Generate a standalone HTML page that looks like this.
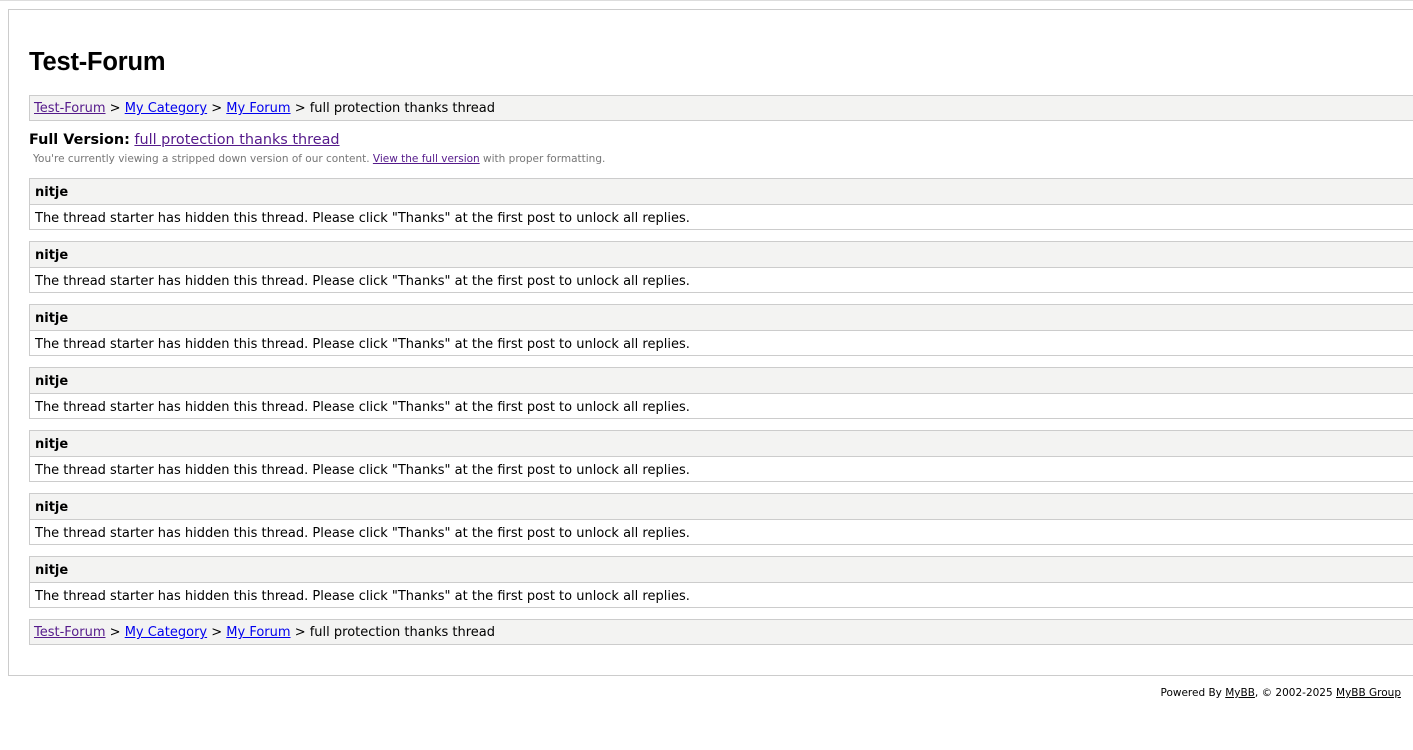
<!DOCTYPE html>
<html><head><meta charset="utf-8"><style>
html,body{margin:0;padding:0;width:1413px;height:750px;overflow:hidden;background:#fff;font-family:"DejaVu Sans",Verdana,sans-serif;color:#000}
.topline{position:absolute;left:0;top:0;width:1413px;height:1px;background:#ddd}
#container{position:absolute;left:8px;top:9px;width:1440px;height:665px;border:1px solid #ccc;border-right:none}
h1{position:absolute;left:20px;top:38px;margin:0;font:bold 25.5px "Liberation Sans",Arial,sans-serif;letter-spacing:-0.2px}
.nav{position:absolute;left:20px;width:1420px;height:26px;background:#f3f3f2;border:1px solid #ccc;font-size:13px;line-height:26px;padding-left:4px;box-sizing:border-box}
a{color:#0000ee}a.v{color:#551a8b}
.fv{position:absolute;left:20px;top:122px;font-size:14.4px}
.fv b{font-weight:bold}
.note{position:absolute;left:24px;top:143px;font-size:10.5px;color:#777}
.note a{color:#551a8b}
.post{position:absolute;left:20px;width:1420px;border:1px solid #ccc;box-sizing:border-box}
.post .h{height:25px;background:#f3f3f2;border-bottom:1px solid #ccc;font-weight:bold;font-size:13px;line-height:28px;padding-left:5px}
.post .m{height:24px;font-size:13px;line-height:27px;padding-left:5px}
.foot{position:absolute;right:12px;top:687px;font-size:10.5px}
.foot a{color:#000}
</style></head><body>
<div class="topline"></div>
<div id="container">
<h1>Test-Forum</h1>
<div class="nav" style="top:85px"><a class="v" href="#">Test-Forum</a> &gt; <a href="#">My Category</a> &gt; <a href="#">My Forum</a> &gt; full protection thanks thread</div>
<div class="fv"><b>Full Version:</b> <a class="v" href="#">full protection thanks thread</a></div>
<div class="note">You're currently viewing a stripped down version of our content. <a href="#">View the full version</a> with proper formatting.</div>
<div class="post" style="top:168px"><div class="h">nitje</div><div class="m">The thread starter has hidden this thread. Please click "Thanks" at the first post to unlock all replies.</div></div>
<div class="post" style="top:231px"><div class="h">nitje</div><div class="m">The thread starter has hidden this thread. Please click "Thanks" at the first post to unlock all replies.</div></div>
<div class="post" style="top:294px"><div class="h">nitje</div><div class="m">The thread starter has hidden this thread. Please click "Thanks" at the first post to unlock all replies.</div></div>
<div class="post" style="top:357px"><div class="h">nitje</div><div class="m">The thread starter has hidden this thread. Please click "Thanks" at the first post to unlock all replies.</div></div>
<div class="post" style="top:420px"><div class="h">nitje</div><div class="m">The thread starter has hidden this thread. Please click "Thanks" at the first post to unlock all replies.</div></div>
<div class="post" style="top:483px"><div class="h">nitje</div><div class="m">The thread starter has hidden this thread. Please click "Thanks" at the first post to unlock all replies.</div></div>
<div class="post" style="top:546px"><div class="h">nitje</div><div class="m">The thread starter has hidden this thread. Please click "Thanks" at the first post to unlock all replies.</div></div>
<div class="nav" style="top:609px"><a class="v" href="#">Test-Forum</a> &gt; <a href="#">My Category</a> &gt; <a href="#">My Forum</a> &gt; full protection thanks thread</div>
</div>
<div class="foot">Powered By <a href="#">MyBB</a>, © 2002-2025 <a href="#">MyBB Group</a></div>
</body></html>
